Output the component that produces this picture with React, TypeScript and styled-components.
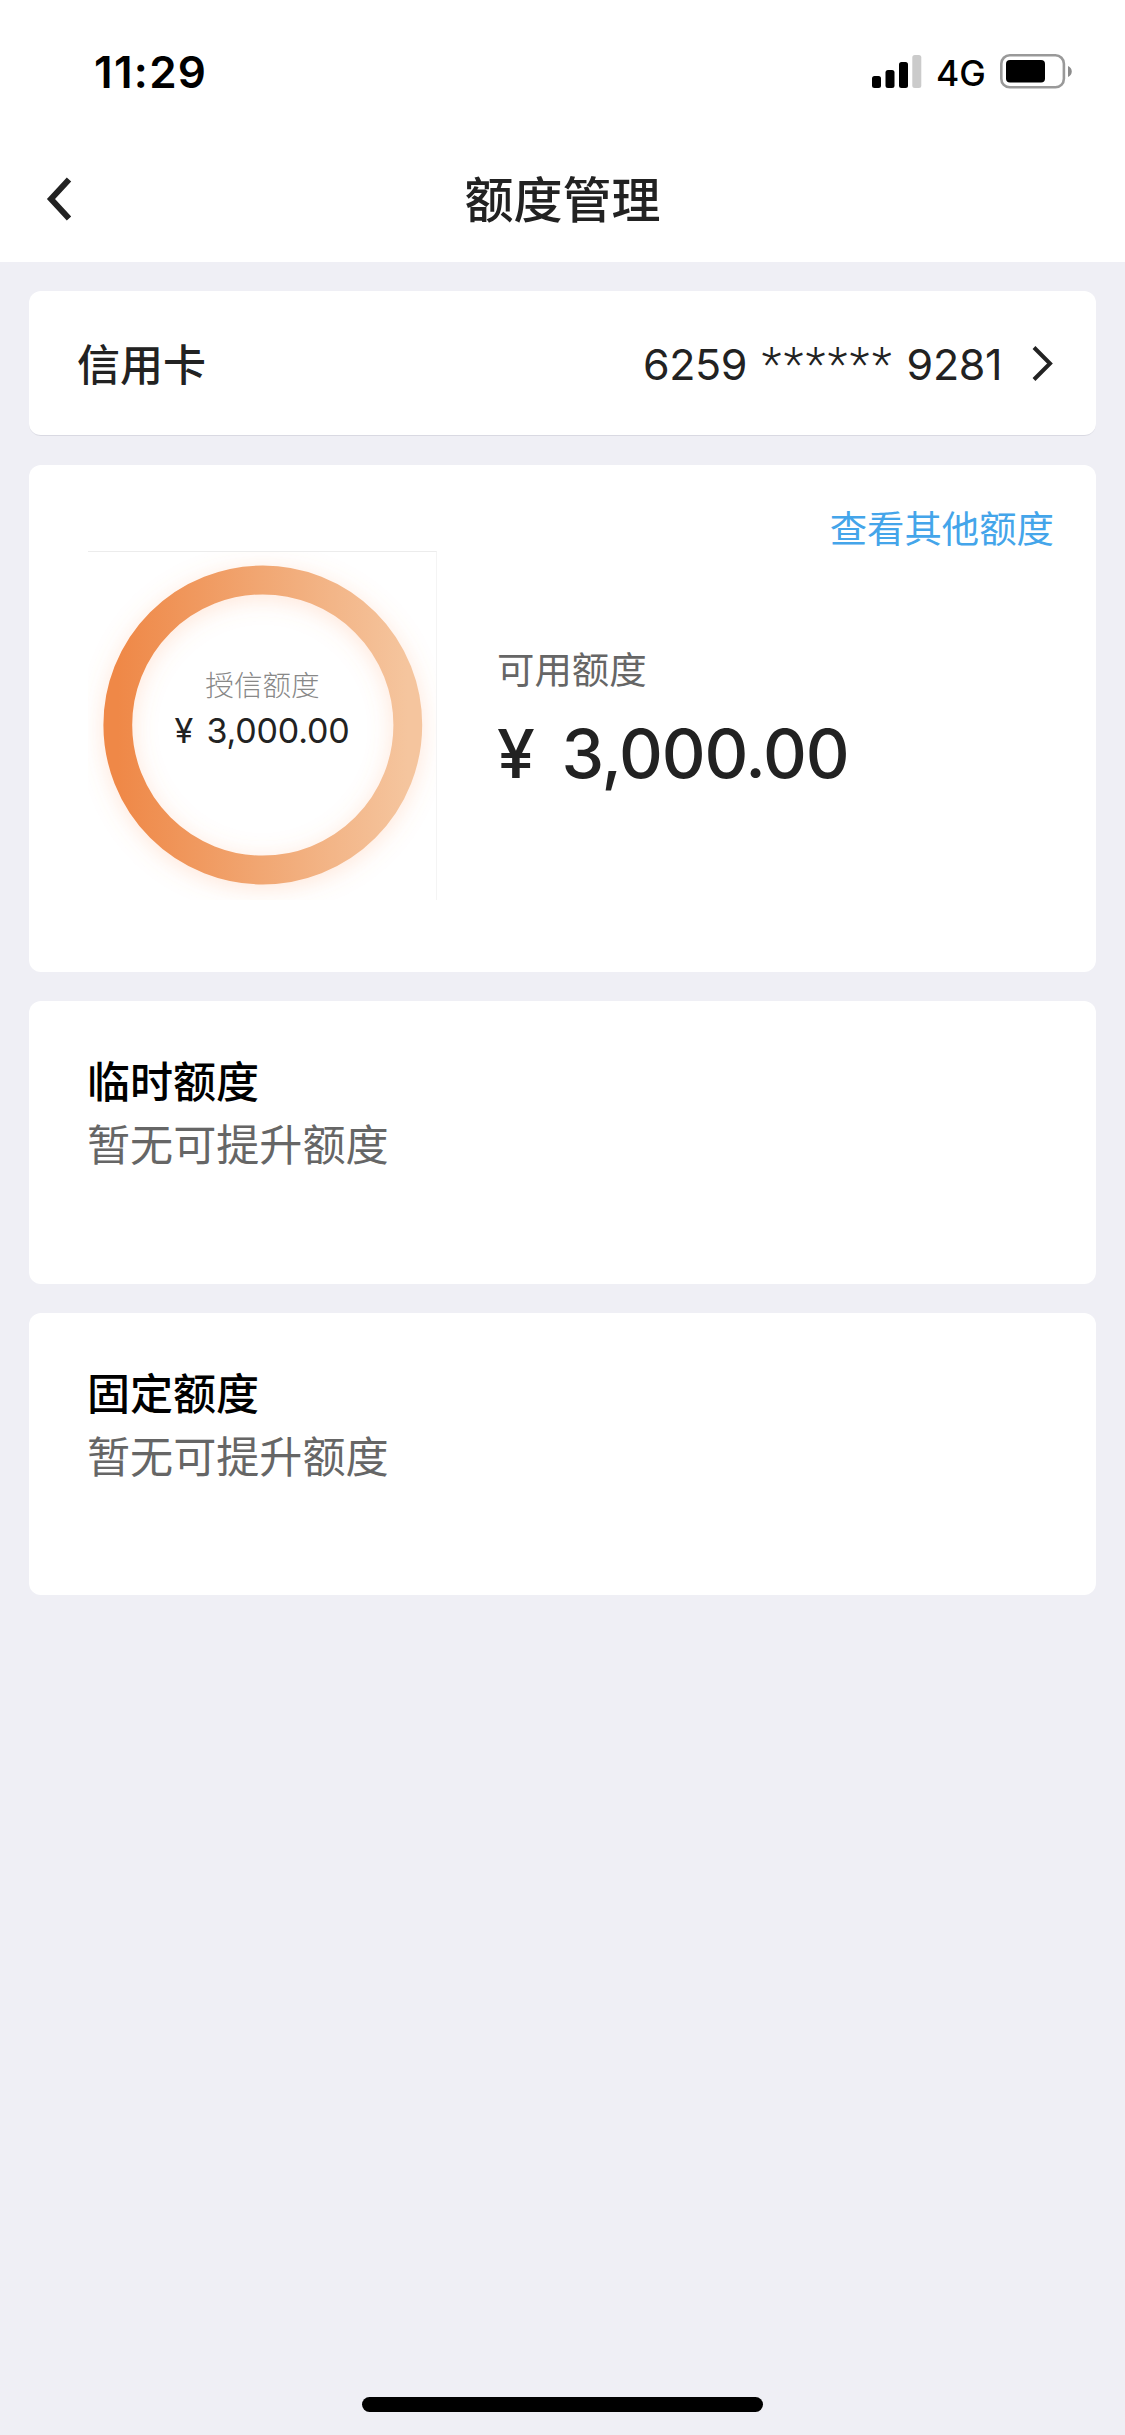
import React from "react";
import styled, { createGlobalStyle } from "styled-components";

const cjk = `"Noto Sans CJK SC", sans-serif`;
const latin = `Inter, "Noto Sans CJK SC", sans-serif`;

const GlobalStyle = createGlobalStyle`
  * { box-sizing: border-box; }
  body { margin: 0; background: #efeff5; font-family: ${cjk}; color: #222; }
`;

const Screen = styled.div`
  display: flex;
  flex-direction: column;
  width: 1125px;
  height: 2435px;
  background: #efeff5;
  overflow: hidden;
`;

const Header = styled.header`
  flex: none;
  height: 262px;
  background: #fff;
`;

const StatusBar = styled.div`
  display: flex;
  justify-content: space-between;
  height: 134px;
  padding: 42px 53px 0 94px;
`;

const Clock = styled.span`
  font: 600 44px/60px ${latin};
  letter-spacing: 1.3px;
  color: #000;
`;

const StatusIcons = styled.div`
  display: flex;
  align-items: flex-start;
  padding-top: 12px;
`;

const Network = styled.span`
  width: 49px;
  margin: 2px 15px 0 14px;
  font: 450 35.5px/36px ${latin};
  white-space: nowrap;
  color: #000;
`;

const NavBar = styled.nav`
  display: grid;
  grid-template-columns: 120px 1fr 120px;
  align-items: center;
  height: 125px;
`;

const BackButton = styled.button`
  display: flex;
  padding: 4px 0 0 45px;
  border: 0;
  background: none;
`;

const PageTitle = styled.h1`
  margin: 0;
  text-align: center;
  font: 500 49px/72px ${cjk};
`;

const Content = styled.main`
  display: flex;
  flex: 1;
  flex-direction: column;
  gap: 29px;
  padding: 29px 29px 0;
`;

const Card = styled.section<{ $height: number }>`
  flex: none;
  height: ${(p) => p.$height}px;
  border-radius: 12px;
  background: #fff;
`;

const CardRow = styled(Card)`
  display: flex;
  align-items: center;
  justify-content: space-between;
  padding: 0 42px 0 48px;
  border-bottom: 1px solid #d9d9e2;
`;

const RowLabel = styled.span`
  padding-bottom: 3px;
  font: 500 43px/60px ${cjk};
`;

const CardNumber = styled.span`
  display: flex;
  align-items: center;
  gap: 30px;
`;

const Digits = styled.span`
  padding-top: 2px;
  font: 400 43px/60px ${latin};
  letter-spacing: -0.4px;
  white-space: pre;
`;

const Stars = styled.span`
  padding: 0 1px 0 3px;
  font-family: Roboto, sans-serif;
  font-size: 46px;
  font-weight: 300;
  letter-spacing: 2.5px;
`;

const QuotaCard = styled(Card)`
  display: grid;
  grid-template-columns: 349px 1fr;
  grid-template-rows: 86px 1fr;
  padding: 0 42px 0 59px;
`;

const MoreLink = styled.a`
  grid-column: 1 / -1;
  justify-self: end;
  padding-top: 34px;
  font: 400 37.4px/56px ${cjk};
  color: #44a5ea;
`;

const Gauge = styled.div`
  display: grid;
  width: 349px;
  height: 349px;
  border-top: 1px solid #ececec;
  border-right: 1px solid #f4f4f4;
  overflow: hidden;

  > * { grid-area: 1 / 1; }
`;

const GaugeText = styled.div`
  display: flex;
  flex-direction: column;
  align-items: center;
  padding-top: 111px;
`;

const GaugeLabel = styled.span`
  margin-bottom: 3px;
  padding-left: 1px;
  font: 300 28.6px/42px ${cjk};
  color: #888;
`;

const Amount = styled.span`
  font: 400 34px/46px ${latin};
  letter-spacing: -0.2px;
  word-spacing: 4.2px;
  white-space: pre;
`;

const LargeAmount = styled(Amount)`
  margin-top: 12px;
  font: 500 68px/90px ${latin};
  letter-spacing: -1.2px;
  word-spacing: 11px;
`;

const Available = styled.div`
  display: flex;
  flex-direction: column;
  padding: 89px 0 0 60px;
`;

const AvailableLabel = styled.span`
  font: 400 37.4px/56px ${cjk};
  color: #666;
`;

const LimitCard = styled(Card)`
  display: flex;
  flex-direction: column;
  padding: 46px 58px 0;
`;

const LimitTitle = styled.h2`
  margin: 0;
  font: 500 43px/64px ${cjk};
  color: #000;
`;

const LimitText = styled.p`
  margin: -1px 0 0;
  font: 400 43.1px/64px ${cjk};
  color: #666;
`;

const HomeArea = styled.footer`
  display: flex;
  justify-content: center;
  height: 38px;
`;

const HomeIndicator = styled.div`
  width: 401px;
  height: 15px;
  border-radius: 8px;
  background: #000;
`;

const Signal = () => (
  <svg width="50" height="36" viewBox="0 0 50 36">
    <rect x="0" y="22" width="9" height="12" rx="2.5" />
    <rect x="13.5" y="16" width="9" height="18" rx="2.5" />
    <rect x="27" y="8" width="9" height="26" rx="2.5" />
    <rect x="40.3" y="1" width="9" height="33" rx="2.5" fill="#cbcbcb" />
  </svg>
);

const Battery = () => (
  <svg width="72" height="36" viewBox="0 0 72 36">
    <rect x="1.3" y="1.3" width="62.6" height="32" rx="8.5" fill="none" stroke="#999" strokeWidth="2.6" />
    <rect x="6" y="6" width="39" height="22.6" rx="4" />
    <path d="M68 12C73 14 73 21 68 23Z" fill="#8c8c8c" />
  </svg>
);

const BackIcon = () => (
  <svg width="28" height="48" viewBox="0 0 28 48" fill="none" stroke="#222" strokeWidth="6">
    <path d="M24 4.5L6 24L24 43.5" />
  </svg>
);

const ForwardIcon = () => (
  <svg width="22" height="36" viewBox="0 0 22 36" fill="none" stroke="#222" strokeWidth="4">
    <path d="M2 2.5L18 18.5L2 34.5" />
  </svg>
);

const Ring = () => (
  <svg width="348" height="348" viewBox="0 0 348 348">
    <defs>
      <linearGradient id="ring" x1="0" y1="0" x2="1" y2="0">
        <stop offset="0" stopColor="#ef8847" />
        <stop offset="0.5" stopColor="#f1a773" />
        <stop offset="1" stopColor="#f5c59e" />
      </linearGradient>
      <filter id="glow" x="-20%" y="-20%" width="140%" height="140%">
        <feGaussianBlur stdDeviation="12" />
      </filter>
    </defs>
    <circle cx="174.8" cy="177" r="145" fill="none" stroke="#fa9c60" strokeOpacity="0.26" strokeWidth="28" filter="url(#glow)" />
    <circle cx="174.8" cy="173" r="145" fill="none" stroke="url(#ring)" strokeWidth="28.8" />
  </svg>
);

const limits = [
  { title: "临时额度", text: "暂无可提升额度", height: 283 },
  { title: "固定额度", text: "暂无可提升额度", height: 282 },
];

export default function App() {
  return (
    <Screen>
      <GlobalStyle />
      <Header>
        <StatusBar>
          <Clock>11:29</Clock>
          <StatusIcons>
            <Signal />
            <Network>4G</Network>
            <Battery />
          </StatusIcons>
        </StatusBar>
        <NavBar>
          <BackButton aria-label="返回">
            <BackIcon />
          </BackButton>
          <PageTitle>额度管理</PageTitle>
        </NavBar>
      </Header>
      <Content>
        <CardRow $height={145}>
          <RowLabel>信用卡</RowLabel>
          <CardNumber>
            <Digits>
              6259 <Stars>******</Stars> 9281
            </Digits>
            <ForwardIcon />
          </CardNumber>
        </CardRow>
        <QuotaCard $height={507}>
          <MoreLink>查看其他额度</MoreLink>
          <Gauge>
            <Ring />
            <GaugeText>
              <GaugeLabel>授信额度</GaugeLabel>
              <Amount>¥ 3,000.00</Amount>
            </GaugeText>
          </Gauge>
          <Available>
            <AvailableLabel>可用额度</AvailableLabel>
            <LargeAmount>¥ 3,000.00</LargeAmount>
          </Available>
        </QuotaCard>
        {limits.map((limit) => (
          <LimitCard key={limit.title} $height={limit.height}>
            <LimitTitle>{limit.title}</LimitTitle>
            <LimitText>{limit.text}</LimitText>
          </LimitCard>
        ))}
      </Content>
      <HomeArea>
        <HomeIndicator />
      </HomeArea>
    </Screen>
  );
}
